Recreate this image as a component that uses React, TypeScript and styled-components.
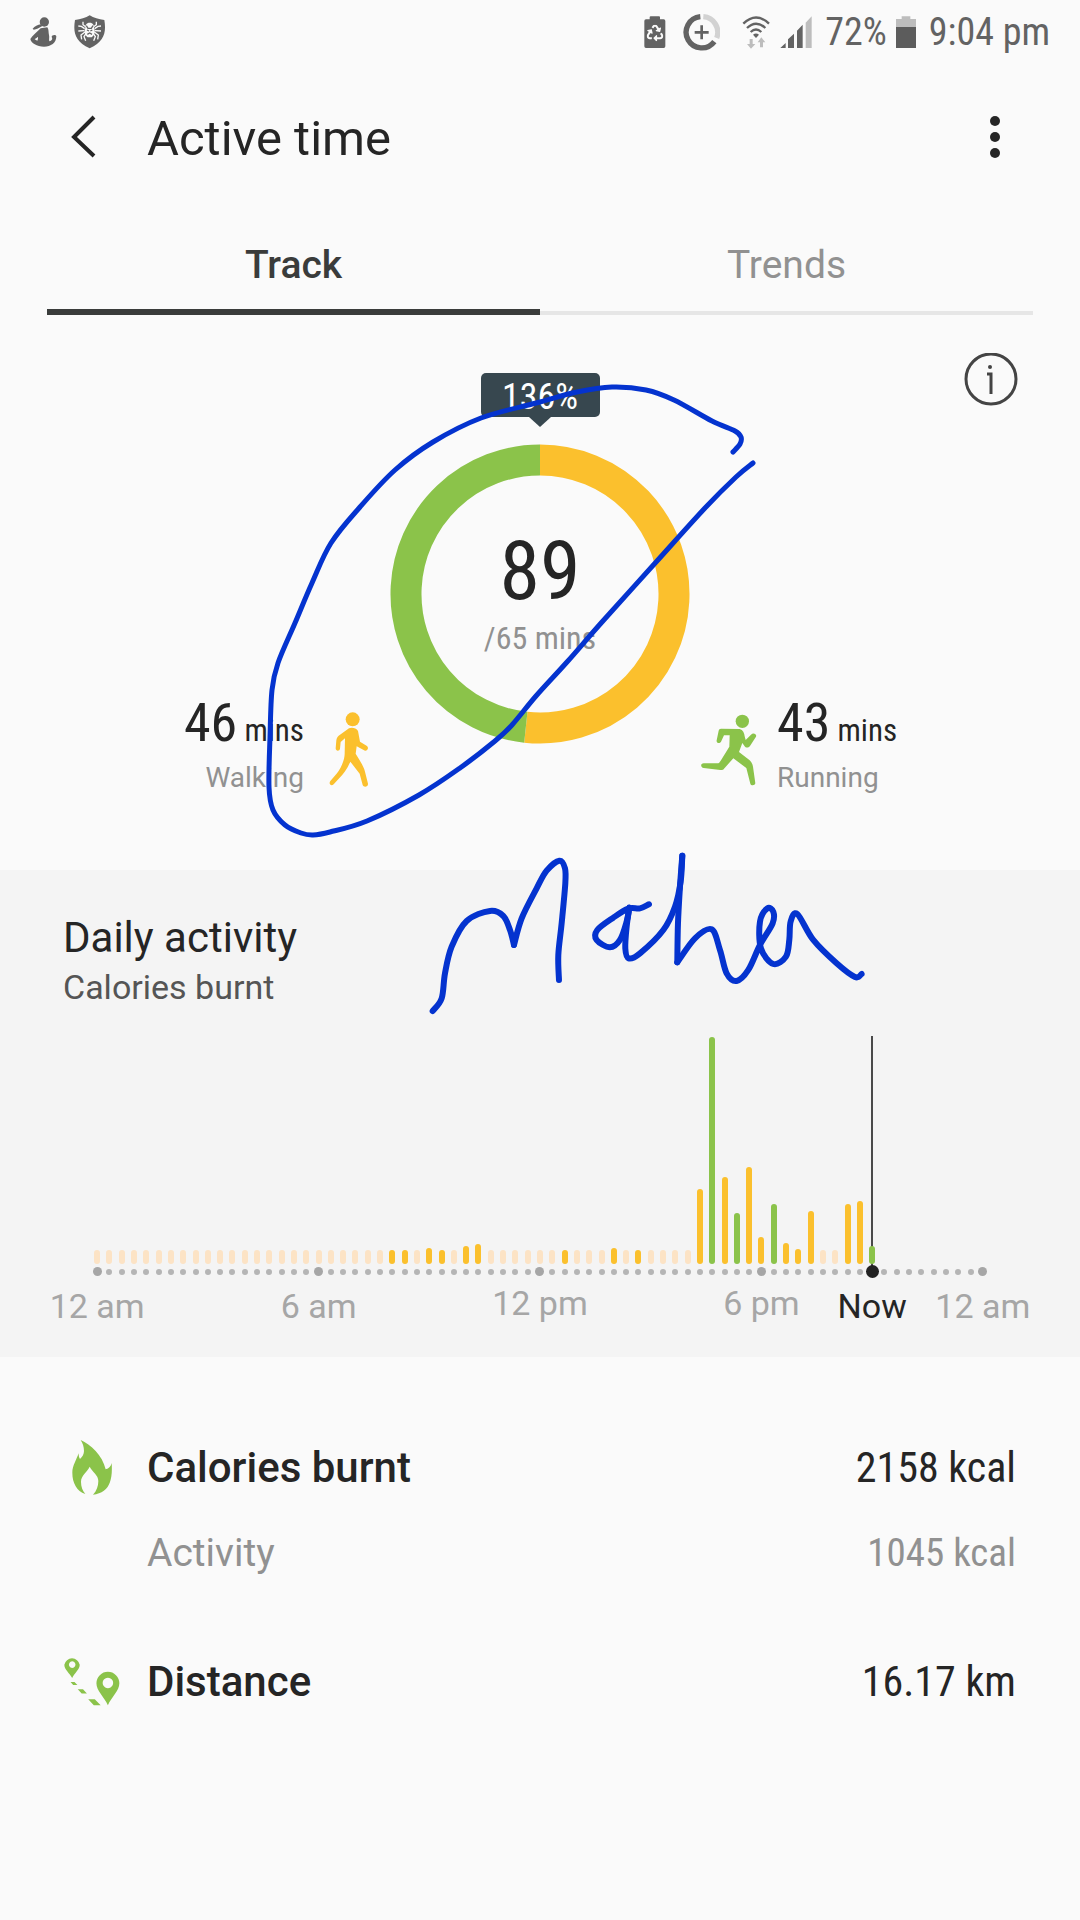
import React from "react";
import styled, { createGlobalStyle } from "styled-components";
import { FaRecycle } from "react-icons/fa";

const color = {
  page: "#fafafa",
  band: "#f4f4f4",
  ink: "#252525",
  body: "#555555",
  muted: "#919191",
  axis: "#a6a6a6",
  status: "#636363",
  faint: "#bdbdbd",
  walk: "#fbc02d",
  run: "#8bc34a",
  idle: "#fce3c5",
  tip: "#37474f",
  pen: "#0433cf",
};

const GlobalStyle = createGlobalStyle`
  *, *::before, *::after { box-sizing: border-box; }
  body {
    margin: 0;
    background: ${color.page};
    color: ${color.ink};
    font-family: Roboto, "Liberation Sans", sans-serif;
  }
  button { border: 0; padding: 0; background: none; color: inherit; font: inherit; cursor: pointer; }
  h1, h2, p, dl, dt, dd { margin: 0; font-weight: 400; }
  svg { display: block; }
`;

const condensed = `font-family: "Roboto Condensed", Roboto, "Liberation Sans", sans-serif;`;

const Screen = styled.div`
  position: relative;
  min-height: 100vh;
  overflow: hidden;
`;

/* ---------- status bar ---------- */

const StatusBar = styled.div`
  display: flex;
  justify-content: space-between;
  align-items: center;
  height: 64px;
  padding: 0 30px;
  color: ${color.status};
`;

const StatusGroup = styled.div<{ $gap: number }>`
  display: flex;
  align-items: center;
  gap: ${(p) => p.$gap}px;
`;

const StatusText = styled.span`
  ${condensed}
  font-size: 38px;
  line-height: 44px;
  white-space: nowrap;
`;

/* ---------- app bar and tabs ---------- */

const AppBar = styled.header`
  display: flex;
  align-items: center;
  height: 149px;
  padding: 0 64px;
`;

const BackButton = styled.button`
  display: flex;
  align-items: center;
  width: 83px;
  height: 84px;
  padding: 0 0 4px 6px;
`;

const Title = styled.h1`
  flex: 1;
  font-size: 49px;
  line-height: 60px;
`;

const MoreButton = styled.button`
  display: flex;
  align-items: center;
  justify-content: center;
  width: 42px;
  height: 84px;
  padding-bottom: 4px;
`;

const TabList = styled.div`
  display: flex;
  padding: 0 47px;
`;

const Tab = styled.button<{ $active?: boolean }>`
  flex: 1;
  height: 102px;
  padding-top: ${(p) => (p.$active ? 8 : 6)}px;
  border-bottom: ${(p) => (p.$active ? "6px solid #3a3c3b" : "4px solid #e6e6e6")};
  color: ${(p) => (p.$active ? "#3a3c3b" : color.muted)};
  font-size: 39px;
  font-weight: ${(p) => (p.$active ? 500 : 400)};
`;

/* ---------- summary ---------- */

const Summary = styled.section`
  display: grid;
  grid-template-columns: 1fr 300px 1fr;
  row-gap: 17px;
  padding: 38px 0 75px;
`;

const PercentTip = styled.div`
  position: relative;
  grid-column: 2;
  place-self: end center;
  width: 119px;
  margin-bottom: 10px;
  padding-top: 4px;
  border-radius: 5px;
  background: ${color.tip};
  color: #fff;
  ${condensed}
  font-size: 36px;
  line-height: 40px;
  text-align: center;

  &::after {
    content: "";
    position: absolute;
    top: 100%;
    left: 50%;
    margin-left: -11px;
    border: 11px solid transparent;
    border-top: 10px solid ${color.tip};
    border-bottom: 0;
  }
`;

const InfoButton = styled.button`
  justify-self: end;
  align-self: start;
  height: 74px;
  margin-right: 62px;
  display: flex;
`;

const Ring = styled.div`
  position: relative;
  grid-column: 2;
  width: 300px;
  height: 300px;
  margin-bottom: 51px;
`;

const RingLabel = styled.div`
  position: absolute;
  inset: 0;
  display: flex;
  flex-direction: column;
  align-items: center;
  padding-top: 79px;
  text-align: center;
`;

const RingValue = styled.p`
  ${condensed}
  font-size: 82px;
  line-height: 96px;
`;

const RingGoal = styled.p`
  ${condensed}
  color: ${color.muted};
  font-size: 32px;
  line-height: 38px;
`;

const Activity = styled.div<{ $side: "left" | "right" }>`
  display: flex;
  flex-direction: ${(p) => (p.$side === "left" ? "row" : "row-reverse")};
  justify-content: flex-end;
  align-items: flex-end;
  align-self: end;
  gap: ${(p) => (p.$side === "left" ? 25 : 20)}px;
  padding: 0 ${(p) => (p.$side === "left" ? 21 : 0)}px 0 ${(p) => (p.$side === "left" ? 0 : 11)}px;
  text-align: ${(p) => (p.$side === "left" ? "right" : "left")};

  svg {
    margin-bottom: 8px;
  }
`;

const ActivityTime = styled.p`
  ${condensed}
  font-size: 31px;
  line-height: 60px;
  white-space: nowrap;
`;

const ActivityCount = styled.span`
  font-size: 54px;
`;

const ActivityName = styled.p`
  color: ${color.muted};
  font-size: 28px;
  line-height: 34px;
`;

/* ---------- daily activity ---------- */

const Daily = styled.section`
  padding: 43px 0 31px;
  background: ${color.band};
`;

const DailyTitle = styled.h2`
  padding: 0 63px;
  font-size: 42px;
  line-height: 50px;
`;

const DailySubtitle = styled.p`
  padding: 0 63px;
  color: ${color.body};
  font-size: 34px;
  line-height: 48px;
`;

const Slots = styled.div`
  display: grid;
  grid-template-columns: repeat(73, minmax(0, 1fr));
  margin: 25px 91px 0;
`;

const Slot = styled.div`
  position: relative;
  display: flex;
  flex-direction: column;
  justify-content: flex-end;
  align-items: center;
  height: 242px;
`;

const Bar = styled.div<{ $fill: string }>`
  position: relative;
  width: 6px;
  border-radius: 3px;
  background: ${(p) => p.$fill};
`;

const NowLine = styled.div`
  position: absolute;
  top: 0;
  bottom: 6px;
  width: 2px;
  background: #4a4a4a;
`;

const DotBox = styled.div`
  display: flex;
  justify-content: center;
  align-items: center;
  flex: none;
  height: 13px;
  margin-top: 1px;
`;

const Dot = styled.div<{ $kind: "minor" | "major" | "now" }>`
  position: relative;
  flex: none;
  width: ${(p) => ({ minor: 6, major: 9, now: 13 })[p.$kind]}px;
  height: ${(p) => ({ minor: 6, major: 9, now: 13 })[p.$kind]}px;
  border-radius: 50%;
  background: ${(p) => ({ minor: "#b5b5b5", major: color.axis, now: "#222222" })[p.$kind]};
`;

const HourLabels = styled.div`
  display: grid;
  grid-template-columns: repeat(73, minmax(0, 1fr));
  margin: 5px 91px 0;
`;

const HourLabel = styled.span<{ $slot: number; $pm?: boolean; $now?: boolean }>`
  grid-row: 1;
  grid-column: ${(p) => p.$slot + 1};
  justify-self: center;
  padding-top: ${(p) => (p.$pm ? 0 : 3)}px;
  color: ${(p) => (p.$now ? color.ink : color.axis)};
  font-size: 34px;
  line-height: 40px;
  white-space: nowrap;
`;

/* ---------- totals ---------- */

const Totals = styled.dl`
  padding: 68px 64px 0;
`;

const TotalRow = styled.div<{ $spaced?: boolean }>`
  display: flex;
  align-items: center;
  height: 85px;
  margin-top: ${(p) => (p.$spaced ? 44 : 0)}px;
`;

const TotalIcon = styled.div`
  display: flex;
  justify-content: center;
  width: 56px;
  margin-right: 27px;
`;

const TotalName = styled.dt<{ $minor?: boolean }>`
  flex: 1;
  color: ${(p) => (p.$minor ? color.muted : color.ink)};
  font-size: ${(p) => (p.$minor ? 39 : 42)}px;
  font-weight: ${(p) => (p.$minor ? 400 : 500)};
`;

const TotalValue = styled.dd<{ $minor?: boolean }>`
  ${condensed}
  color: ${(p) => (p.$minor ? color.muted : color.ink)};
  font-size: ${(p) => (p.$minor ? 39 : 42)}px;
`;

const Ink = styled.svg`
  position: absolute;
  top: 0;
  left: 0;
  width: 100%;
  pointer-events: none;
`;

/* ---------- icons ---------- */

const GirlIcon = () => (
  <svg width="27" height="30" viewBox="89 46 81 90" fill={color.status}>
    <circle cx="132" cy="61" r="14" />
    <path d="M97 81 C103 73 112 70 122 68 L126 73 C117 79 108 83 100 84Z" />
    <path
      fillRule="evenodd"
      d="M121 80 L141 77 C146 84 144 92 146 100 C148 108 145 112 147 119 C154 117 158 113 154 106 C154 99 167 98 168 104 C168 124 152 135 131 135 C110 135 92 124 90 112 C96 103 108 92 121 80Z M103 113 C107 110 111 107 113 106 C113 110 113 113 111 117Z"
    />
  </svg>
);

const SpiderShieldIcon = () => (
  <svg width="32" height="34" viewBox="221 41 96 102">
    <path
      fill={color.status}
      d="M268 42 C280 50 295 54 312 56 C318 92 313 121 268 141 C223 121 218 92 224 56 C241 54 256 50 268 42Z"
    />
    <g fill="none" stroke={color.page} strokeWidth="4">
      <path d="M256 76 L248 70 L248 61 M253 82 L243 75 L234 74 M252 88 L234 89 M254 92 L242 101 L244 114 M257 97 L251 106 L256 118" />
      <path d="M280 76 L288 70 L288 61 M283 82 L293 75 L302 74 M284 88 L302 89 M282 92 L294 101 L292 114 M279 97 L285 106 L280 118" />
    </g>
    <path fill={color.page} d="M268 64 C278 64 282 72 281 80 C286 90 282 102 274 108 H262 C254 102 250 90 255 80 C254 72 258 64 268 64Z" />
    <path
      fill="none"
      stroke={color.status}
      strokeWidth="4"
      d="M258 73 L263 81 H273 L278 73 M260 86 L266 89 M276 86 L270 89 M261 99 L268 95 L275 99"
    />
  </svg>
);

const BatterySaverIcon = () => (
  <svg width="22" height="33" viewBox="68 43 66 99">
    <path fill={color.status} d="M88 44 H113 Q116 44 116 47 V53 H127 Q132 53 132 58 V134 Q132 139 127 139 H74 Q69 139 69 134 V58 Q69 53 74 53 H85 V47 Q85 44 88 44Z" />
    <FaRecycle x="76" y="69" size={50} color={color.page} />
  </svg>
);

const DataSaverIcon = () => (
  <svg width="37" height="37" viewBox="184 38 111 111" fill="none" strokeWidth="16">
    <path stroke="#d2d2d2" d="M245 46 A47 47 0 0 1 285 110" />
    <path stroke={color.status} d="M236 46 A47 47 0 1 0 278 121" />
    <path stroke={color.status} strokeWidth="8" d="M240 72 V114 M219 93 H261" />
  </svg>
);

const WifiIcon = () => (
  <svg width="28" height="33" viewBox="364 41 84 99" fill="none" stroke={color.status} strokeWidth="7">
    <path d="M368 64 Q406 27 445 64 M379 77 Q406 51 434 77 M390 89 Q406 74 422 89" />
    <path stroke="none" fill={color.status} d="M397 97 Q406 90 415 97 L406 107Z" />
    <path
      stroke="none"
      fill={color.faint}
      d="M387 110 H396 V125 H404 L391 139 L379 125 H387Z M418 135 H427 V120 H434 L422 105 L411 120 H418Z"
    />
  </svg>
);

const SignalIcon = () => (
  <svg width="32" height="33" viewBox="481 43 96 99" fill={color.status}>
    <path d="M482 139 L498 124 V139Z M505 113 L523 96 V139 H505Z M532 87 L549 69 V139 H532Z" />
    <path fill={color.faint} d="M558 63 L576 44 V139 H558Z" />
  </svg>
);

const BatteryIcon = () => (
  <svg width="20" height="33" viewBox="828 43 60 99">
    <path fill={color.faint} d="M845 44 H871 V52 H888 V76 H828 V52 H845Z" />
    <path fill="#5c5c5c" d="M828 76 H888 V139 H828Z" />
  </svg>
);

const BackIcon = () => (
  <svg width="28" height="44" viewBox="0 0 28 44" fill="none" stroke={color.ink} strokeWidth="4">
    <path d="M24 2 L4 22 L24 41" />
  </svg>
);

const MoreIcon = () => (
  <svg width="10" height="42" viewBox="0 0 10 42" fill={color.ink}>
    <circle cx="5" cy="5" r="5" />
    <circle cx="5" cy="21" r="5" />
    <circle cx="5" cy="37" r="5" />
  </svg>
);

const InfoIcon = () => (
  <svg width="54" height="54" viewBox="0 0 54 54" fill="none" stroke="#444444" strokeWidth="3">
    <circle cx="27" cy="26" r="25" />
    <path d="M23 21 H27 V41" />
    <circle cx="26" cy="14" r="2" fill="#444444" stroke="none" />
  </svg>
);

const WalkIcon = () => (
  <svg width="40" height="75" viewBox="508 213 120 225" fill={color.walk}>
    <circle cx="579" cy="235" r="21" />
    <path d="M568 262 C575 258 590 260 595 270 L601 302 L622 315 C628 320 624 330 616 329 L591 316 L588 338 C598 355 612 375 616 392 L625 428 C626 438 612 440 609 432 L600 398 L572 362 C562 385 550 400 540 410 L522 430 C514 437 506 428 512 420 L532 397 C545 380 555 355 555 338 L556 292 L543 303 L541 323 C540 331 528 331 528 322 L530 298 C531 290 535 284 541 281Z" />
  </svg>
);

const RunIcon = () => (
  <svg width="56" height="73" viewBox="62 98 168 219" fill={color.run}>
    <circle cx="186" cy="120" r="20" />
    <path d="M122 142 L178 143 C188 146 192 155 193 165 L196 176 L212 160 C220 152 232 160 226 168 L209 194 C204 200 198 200 194 196 L186 185 L176 212 L208 237 C214 242 217 250 218 256 L225 306 C224 313 212 314 210 307 L198 260 L159 231 L131 262 C128 266 124 267 120 266 L70 260 C60 258 60 246 70 246 L114 246 C118 244 120 240 122 237 L147 196 L148 162 L131 162 L122 181 C118 188 107 185 109 177 L115 148 C116 144 118 142 122 142Z" />
  </svg>
);

const FlameIcon = () => (
  <svg width="40" height="55" viewBox="96 117 120 165" fill={color.run}>
    <path d="M122 117 C152 130 187 162 197 205 C207 203 213 195 215 186 C217 215 214 230 210 243 C203 265 185 278 159 281 C170 270 175 255 175 240 C175 222 158 214 149 197 C143 212 123 222 123 243 C123 258 128 270 136 279 C110 270 97 245 97 215 C97 195 110 175 116 157 C116 165 117 170 120 174 C127 168 132 160 132 150 C132 137 128 127 122 117Z" />
  </svg>
);

const RouteIcon = () => (
  <svg width="57" height="51" viewBox="72 765 171 153" fill={color.run}>
    <path
      fillRule="evenodd"
      d="M97 831 C89 815 73 805 73 790 A24 24 0 0 1 120 790 C120 805 104 815 97 831Z M97 780 a10 10 0 1 0 0.1 0Z"
    />
    <path
      fillRule="evenodd"
      d="M206 914 C194 888 171 870 171 847 A35 35 0 0 1 241 847 C241 870 218 888 206 914Z M206 830 a16 16 0 1 0 0.1 0Z"
    />
    <path d="M92 843 H104 L113 852 H100Z M114 865 H130 L142 878 H126Z M146 896 H166 L184 914 H163Z" />
  </svg>
);

/* ---------- activity ring ---------- */

const RING_RADIUS = 134;

function ringArc(from: number, to: number) {
  const at = (t: number) => {
    const a = t * 2 * Math.PI;
    return `${150 + RING_RADIUS * Math.sin(a)} ${150 - RING_RADIUS * Math.cos(a)}`;
  };
  return `M${at(from)} A${RING_RADIUS} ${RING_RADIUS} 0 ${to - from > 0.5 ? 1 : 0} 1 ${at(to)}`;
}

const RingChart = ({ walking, running }: { walking: number; running: number }) => {
  const split = walking / (walking + running);
  return (
    <svg width="300" height="300" viewBox="0 0 300 300" fill="none" strokeWidth="31">
      <path stroke={color.walk} d={ringArc(0, split)} />
      <path stroke={color.run} d={ringArc(split, 1)} />
    </svg>
  );
};

/* ---------- chart data: one slot per 20 minutes ---------- */

const NOW = 63;
const walked: Record<number, number> = {
  24: 14, 25: 14, 27: 16, 28: 14, 30: 18, 31: 20, 38: 14, 42: 16, 44: 14,
  49: 75, 51: 87, 53: 97, 54: 27, 56: 21, 57: 15, 58: 53, 61: 60, 62: 63,
};
const ran: Record<number, number> = { 50: 227, 52: 51, 55: 60, 63: 18 };

const slots = Array.from({ length: 73 }, (_, i) => ({
  index: i,
  height: i > NOW ? 0 : (ran[i] ?? walked[i] ?? 14),
  fill: ran[i] ? color.run : walked[i] ? color.walk : color.idle,
  dot: (i === NOW ? "now" : i % 18 === 0 ? "major" : "minor") as "now" | "major" | "minor",
}));

/* ---------- pen strokes ---------- */

type Points = [number, number][];

function smooth(pts: Points) {
  let d = `M${pts[0].join(" ")}`;
  for (let i = 0; i < pts.length - 1; i++) {
    const p0 = pts[Math.max(i - 1, 0)];
    const p1 = pts[i];
    const p2 = pts[i + 1];
    const p3 = pts[Math.min(i + 2, pts.length - 1)];
    d += ` C${p1[0] + (p2[0] - p0[0]) / 6} ${p1[1] + (p2[1] - p0[1]) / 6} ${p2[0] - (p3[0] - p1[0]) / 6} ${p2[1] - (p3[1] - p1[1]) / 6} ${p2[0]} ${p2[1]}`;
  }
  return d;
}

const loop: Points = [
  [733, 452], [740, 444], [741, 437], [735, 431], [712, 421], [674, 400], [646, 390], [612, 387], [577, 392],
  [536, 403], [481, 418], [433, 442], [395, 470], [360, 507], [331, 543], [312, 583], [295, 623],
  [278, 663], [272, 690], [270, 737], [269, 787], [273, 810], [285, 825], [301, 833], [313, 835],
  [330, 832], [367, 821], [419, 795], [460, 768], [495, 741], [512, 725], [536, 696], [567, 662],
  [602, 622], [657, 561], [705, 508], [736, 477], [753, 463],
];

const signature: Points[] = [
  [[98, 513], [125, 475], [135, 400], [155, 320], [200, 243], [270, 213], [310, 228], [330, 270], [342, 315]],
  [[342, 315], [365, 235], [410, 145], [440, 92], [478, 62], [495, 85], [496, 130], [485, 250], [475, 345], [477, 420]],
  [[747, 193], [720, 205], [685, 206], [640, 233], [592, 270], [590, 300], [630, 322], [660, 300], [680, 245], [688, 203]],
  [[688, 203], [680, 260], [676, 325], [686, 355], [720, 340], [790, 270], [825, 200], [842, 125], [847, 47]],
  [[847, 47], [840, 140], [834, 250], [832, 367]],
  [[832, 367], [885, 295], [935, 268], [960, 330], [980, 400], [1010, 423], [1045, 390], [1080, 315], [1118, 250],
    [1120, 215], [1102, 205], [1080, 245], [1083, 325], [1120, 372], [1158, 350], [1168, 300], [1172, 245], [1192, 222],
    [1240, 300], [1310, 370], [1365, 411], [1385, 402]],
];

export default function App() {
  return (
    <>
      <GlobalStyle />
      <Screen>
        <StatusBar>
          <StatusGroup $gap={17}>
            <GirlIcon />
            <SpiderShieldIcon />
          </StatusGroup>
          <StatusGroup $gap={13}>
            <StatusGroup $gap={22}>
              <StatusGroup $gap={17}>
                <BatterySaverIcon />
                <DataSaverIcon />
              </StatusGroup>
              <StatusGroup $gap={10}>
                <WifiIcon />
                <SignalIcon />
              </StatusGroup>
            </StatusGroup>
            <StatusGroup $gap={9}>
              <StatusText>72%</StatusText>
              <BatteryIcon />
            </StatusGroup>
            <StatusText>9:04 pm</StatusText>
          </StatusGroup>
        </StatusBar>

        <AppBar>
          <BackButton aria-label="Back">
            <BackIcon />
          </BackButton>
          <Title>Active time</Title>
          <MoreButton aria-label="More options">
            <MoreIcon />
          </MoreButton>
        </AppBar>

        <TabList role="tablist">
          <Tab role="tab" aria-selected="true" $active>Track</Tab>
          <Tab role="tab" aria-selected="false">Trends</Tab>
        </TabList>

        <Summary>
          <PercentTip>136%</PercentTip>
          <InfoButton aria-label="Information">
            <InfoIcon />
          </InfoButton>
          <Activity $side="left">
            <div>
              <ActivityTime><ActivityCount>46</ActivityCount> mins</ActivityTime>
              <ActivityName>Walking</ActivityName>
            </div>
            <WalkIcon />
          </Activity>
          <Ring>
            <RingChart walking={46} running={43} />
            <RingLabel>
              <RingValue>89</RingValue>
              <RingGoal>/65 mins</RingGoal>
            </RingLabel>
          </Ring>
          <Activity $side="right">
            <div>
              <ActivityTime><ActivityCount>43</ActivityCount> mins</ActivityTime>
              <ActivityName>Running</ActivityName>
            </div>
            <RunIcon />
          </Activity>
        </Summary>

        <Daily>
          <DailyTitle>Daily activity</DailyTitle>
          <DailySubtitle>Calories burnt</DailySubtitle>
          <Slots>
            {slots.map((s) => (
              <Slot key={s.index}>
                {s.index === NOW && <NowLine />}
                {s.height > 0 && <Bar $fill={s.fill} style={{ height: s.height }} />}
                <DotBox>
                  <Dot $kind={s.dot} />
                </DotBox>
              </Slot>
            ))}
          </Slots>
          <HourLabels>
            <HourLabel $slot={0}>12 am</HourLabel>
            <HourLabel $slot={18}>6 am</HourLabel>
            <HourLabel $slot={36} $pm>12 pm</HourLabel>
            <HourLabel $slot={54} $pm>6 pm</HourLabel>
            <HourLabel $slot={NOW} $now>Now</HourLabel>
            <HourLabel $slot={72}>12 am</HourLabel>
          </HourLabels>
        </Daily>

        <Totals>
          <TotalRow>
            <TotalIcon><FlameIcon /></TotalIcon>
            <TotalName>Calories burnt</TotalName>
            <TotalValue>2158 kcal</TotalValue>
          </TotalRow>
          <TotalRow>
            <TotalIcon />
            <TotalName $minor>Activity</TotalName>
            <TotalValue $minor>1045 kcal</TotalValue>
          </TotalRow>
          <TotalRow $spaced>
            <TotalIcon><RouteIcon /></TotalIcon>
            <TotalName>Distance</TotalName>
            <TotalValue>16.17 km</TotalValue>
          </TotalRow>
        </Totals>

        <Ink viewBox="0 0 1080 1920" fill="none" stroke={color.pen} strokeLinecap="round" strokeLinejoin="round" aria-hidden="true">
          <path strokeWidth="5" d={smooth(loop)} />
          <g transform="translate(400 840) scale(0.3333)" strokeWidth="18">
            {signature.map((pts, i) => (
              <path key={i} d={smooth(pts)} />
            ))}
          </g>
        </Ink>
      </Screen>
    </>
  );
}
